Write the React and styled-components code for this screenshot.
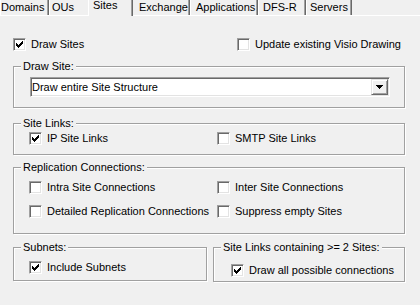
import React from 'react';
import styled, { createGlobalStyle } from 'styled-components';

const GlobalStyle = createGlobalStyle`
  html, body {
    margin: 0;
    padding: 0;
    background: #f0f0f0;
  }
  body {
    font-family: "Liberation Sans", Arial, sans-serif;
    font-size: 11px;
    color: #000;
  }
  #root {
    width: 420px;
    height: 305px;
    overflow: hidden;
  }
`;

const tabs = [
  { label: 'Domains', w: 49, pl: 0 },
  { label: 'OUs', w: 41, pl: 2 },
  { label: 'Sites', w: 45, pl: 4, selected: true },
  { label: 'Exchange', w: 59, pl: 7 },
  { label: 'Applications', w: 68, pl: 5 },
  { label: 'DFS-R', w: 48, pl: 4 },
  { label: 'Servers', w: 46, pl: 3 }
];

const TabStrip = styled.div`
  display: flex;
  align-items: flex-start;
  height: 15px;
  border-bottom: 1px solid #fff;
`;

const Tab = styled.div`
  position: relative;
  flex: none;
  box-sizing: border-box;
  width: ${({ $w }) => $w}px;
  height: ${({ $selected }) => ($selected ? 16 : 15)}px;
  margin: 0 ${({ $selected }) => ($selected ? '-2px' : 0)};
  padding-left: ${({ $pl }) => $pl}px;
  line-height: ${({ $selected }) => ($selected ? 10 : 14)}px;
  white-space: nowrap;
  overflow: hidden;
  background: #f0f0f0;
  border-left: 1px solid #fff;
  border-right: 1px solid #696969;
  box-shadow: inset -1px 0 0 #a0a0a0;
  z-index: ${({ $selected }) => ($selected ? 1 : 0)};
`;

const Panel = styled.div`
  padding: 22px 15px 0 13px;
`;

const TopRow = styled.div`
  display: grid;
  grid-template-columns: 224px auto;
`;

const Columns = styled.div`
  display: grid;
  grid-template-columns: ${({ $col }) => $col}px auto;
  row-gap: ${({ $gap }) => $gap || 0}px;
`;

const Group = styled.div`
  position: relative;
  box-sizing: border-box;
  height: ${({ $h }) => $h}px;
  width: ${({ $w }) => ($w ? `${$w}px` : 'auto')};
  margin-top: ${({ $mt }) => $mt || 0}px;
  padding: ${({ $pt }) => $pt}px 0 0 ${({ $pl }) => $pl}px;
  border: 1px solid #a0a0a0;
  box-shadow: 1px 1px 0 #fff, inset 1px 1px 0 #fff;
`;

const Legend = styled.span`
  position: absolute;
  top: -7px;
  left: 7px;
  padding: 0 2px;
  line-height: 13px;
  white-space: nowrap;
  background: #f0f0f0;
`;

const BottomRow = styled.div`
  display: flex;
  gap: 6px;
  margin-top: 13px;
`;

const CheckLabel = styled.label`
  display: flex;
  align-items: center;
  gap: 5px;
  height: 13px;
  line-height: 13px;
  white-space: nowrap;
`;

const Box = styled.span`
  flex: none;
  display: block;
  box-sizing: border-box;
  width: 13px;
  height: 13px;
  background: #fff;
  border: 1px solid;
  border-color: #a0a0a0 #fff #fff #a0a0a0;
  box-shadow: inset 1px 1px 0 #696969, inset -1px -1px 0 #e3e3e3;

  svg {
    display: block;
    margin: 2px;
  }
`;

const Combo = styled.div`
  display: flex;
  align-items: center;
  box-sizing: border-box;
  width: 360px;
  height: 20px;
  padding: 1px;
  background: #fff;
  border: 1px solid;
  border-color: #a0a0a0 #fff #fff #a0a0a0;
  box-shadow: inset 1px 1px 0 #696969, inset -1px -1px 0 #e3e3e3;
`;

const ComboText = styled.span`
  flex: 1;
  line-height: 16px;
  white-space: nowrap;
`;

const ComboButton = styled.span`
  display: flex;
  align-items: center;
  justify-content: center;
  box-sizing: border-box;
  width: 17px;
  height: 16px;
  background: #f0f0f0;
  border: 1px solid;
  border-color: #e3e3e3 #696969 #696969 #e3e3e3;
  box-shadow: inset 1px 1px 0 #fff, inset -1px -1px 0 #a0a0a0;
`;

const checkCols = [2, 3, 4, 3, 2, 1, 0];

function CheckBox({ label, checked }) {
  return (
    <CheckLabel>
      <Box>
        {checked && (
          <svg width="7" height="7" viewBox="0 0 7 7" shapeRendering="crispEdges">
            {checkCols.map((y, x) => (
              <rect key={x} x={x} y={y} width="1" height="3" fill="#000" />
            ))}
          </svg>
        )}
      </Box>
      <span>{label}</span>
    </CheckLabel>
  );
}

function DropArrow() {
  return (
    <svg width="7" height="4" viewBox="0 0 7 4" shapeRendering="crispEdges">
      <rect x="0" y="0" width="7" height="1" fill="#000" />
      <rect x="1" y="1" width="5" height="1" fill="#000" />
      <rect x="2" y="2" width="3" height="1" fill="#000" />
      <rect x="3" y="3" width="1" height="1" fill="#000" />
    </svg>
  );
}

export default function App() {
  return (
    <>
      <GlobalStyle />
      <TabStrip>
        {tabs.map((t) => (
          <Tab key={t.label} $w={t.w} $pl={t.pl} $selected={t.selected}>
            {t.label}
          </Tab>
        ))}
      </TabStrip>
      <Panel>
        <TopRow>
          <CheckBox label="Draw Sites" checked />
          <CheckBox label="Update existing Visio Drawing" />
        </TopRow>

        <Group $h={42} $mt={15} $pt={10} $pl={16}>
          <Legend>Draw Site:</Legend>
          <Combo>
            <ComboText>Draw entire Site Structure</ComboText>
            <ComboButton>
              <DropArrow />
            </ComboButton>
          </Combo>
        </Group>

        <Group $h={32} $mt={15} $pt={8} $pl={15}>
          <Legend>Site Links:</Legend>
          <Columns $col={188}>
            <CheckBox label="IP Site Links" checked />
            <CheckBox label="SMTP Site Links" />
          </Columns>
        </Group>

        <Group $h={67} $mt={12} $pt={13} $pl={15}>
          <Legend>Replication Connections:</Legend>
          <Columns $col={188} $gap={11}>
            <CheckBox label="Intra Site Connections" />
            <CheckBox label="Inter Site Connections" />
            <CheckBox label="Detailed Replication Connections" />
            <CheckBox label="Suppress empty Sites" />
          </Columns>
        </Group>

        <BottomRow>
          <Group $w={194} $h={34} $pt={13} $pl={15}>
            <Legend>Subnets:</Legend>
            <CheckBox label="Include Subnets" checked />
          </Group>
          <Group $w={192} $h={35} $pt={16} $pl={17}>
            <Legend>Site Links containing &gt;= 2 Sites:</Legend>
            <CheckBox label="Draw all possible connections" checked />
          </Group>
        </BottomRow>
      </Panel>
    </>
  );
}
